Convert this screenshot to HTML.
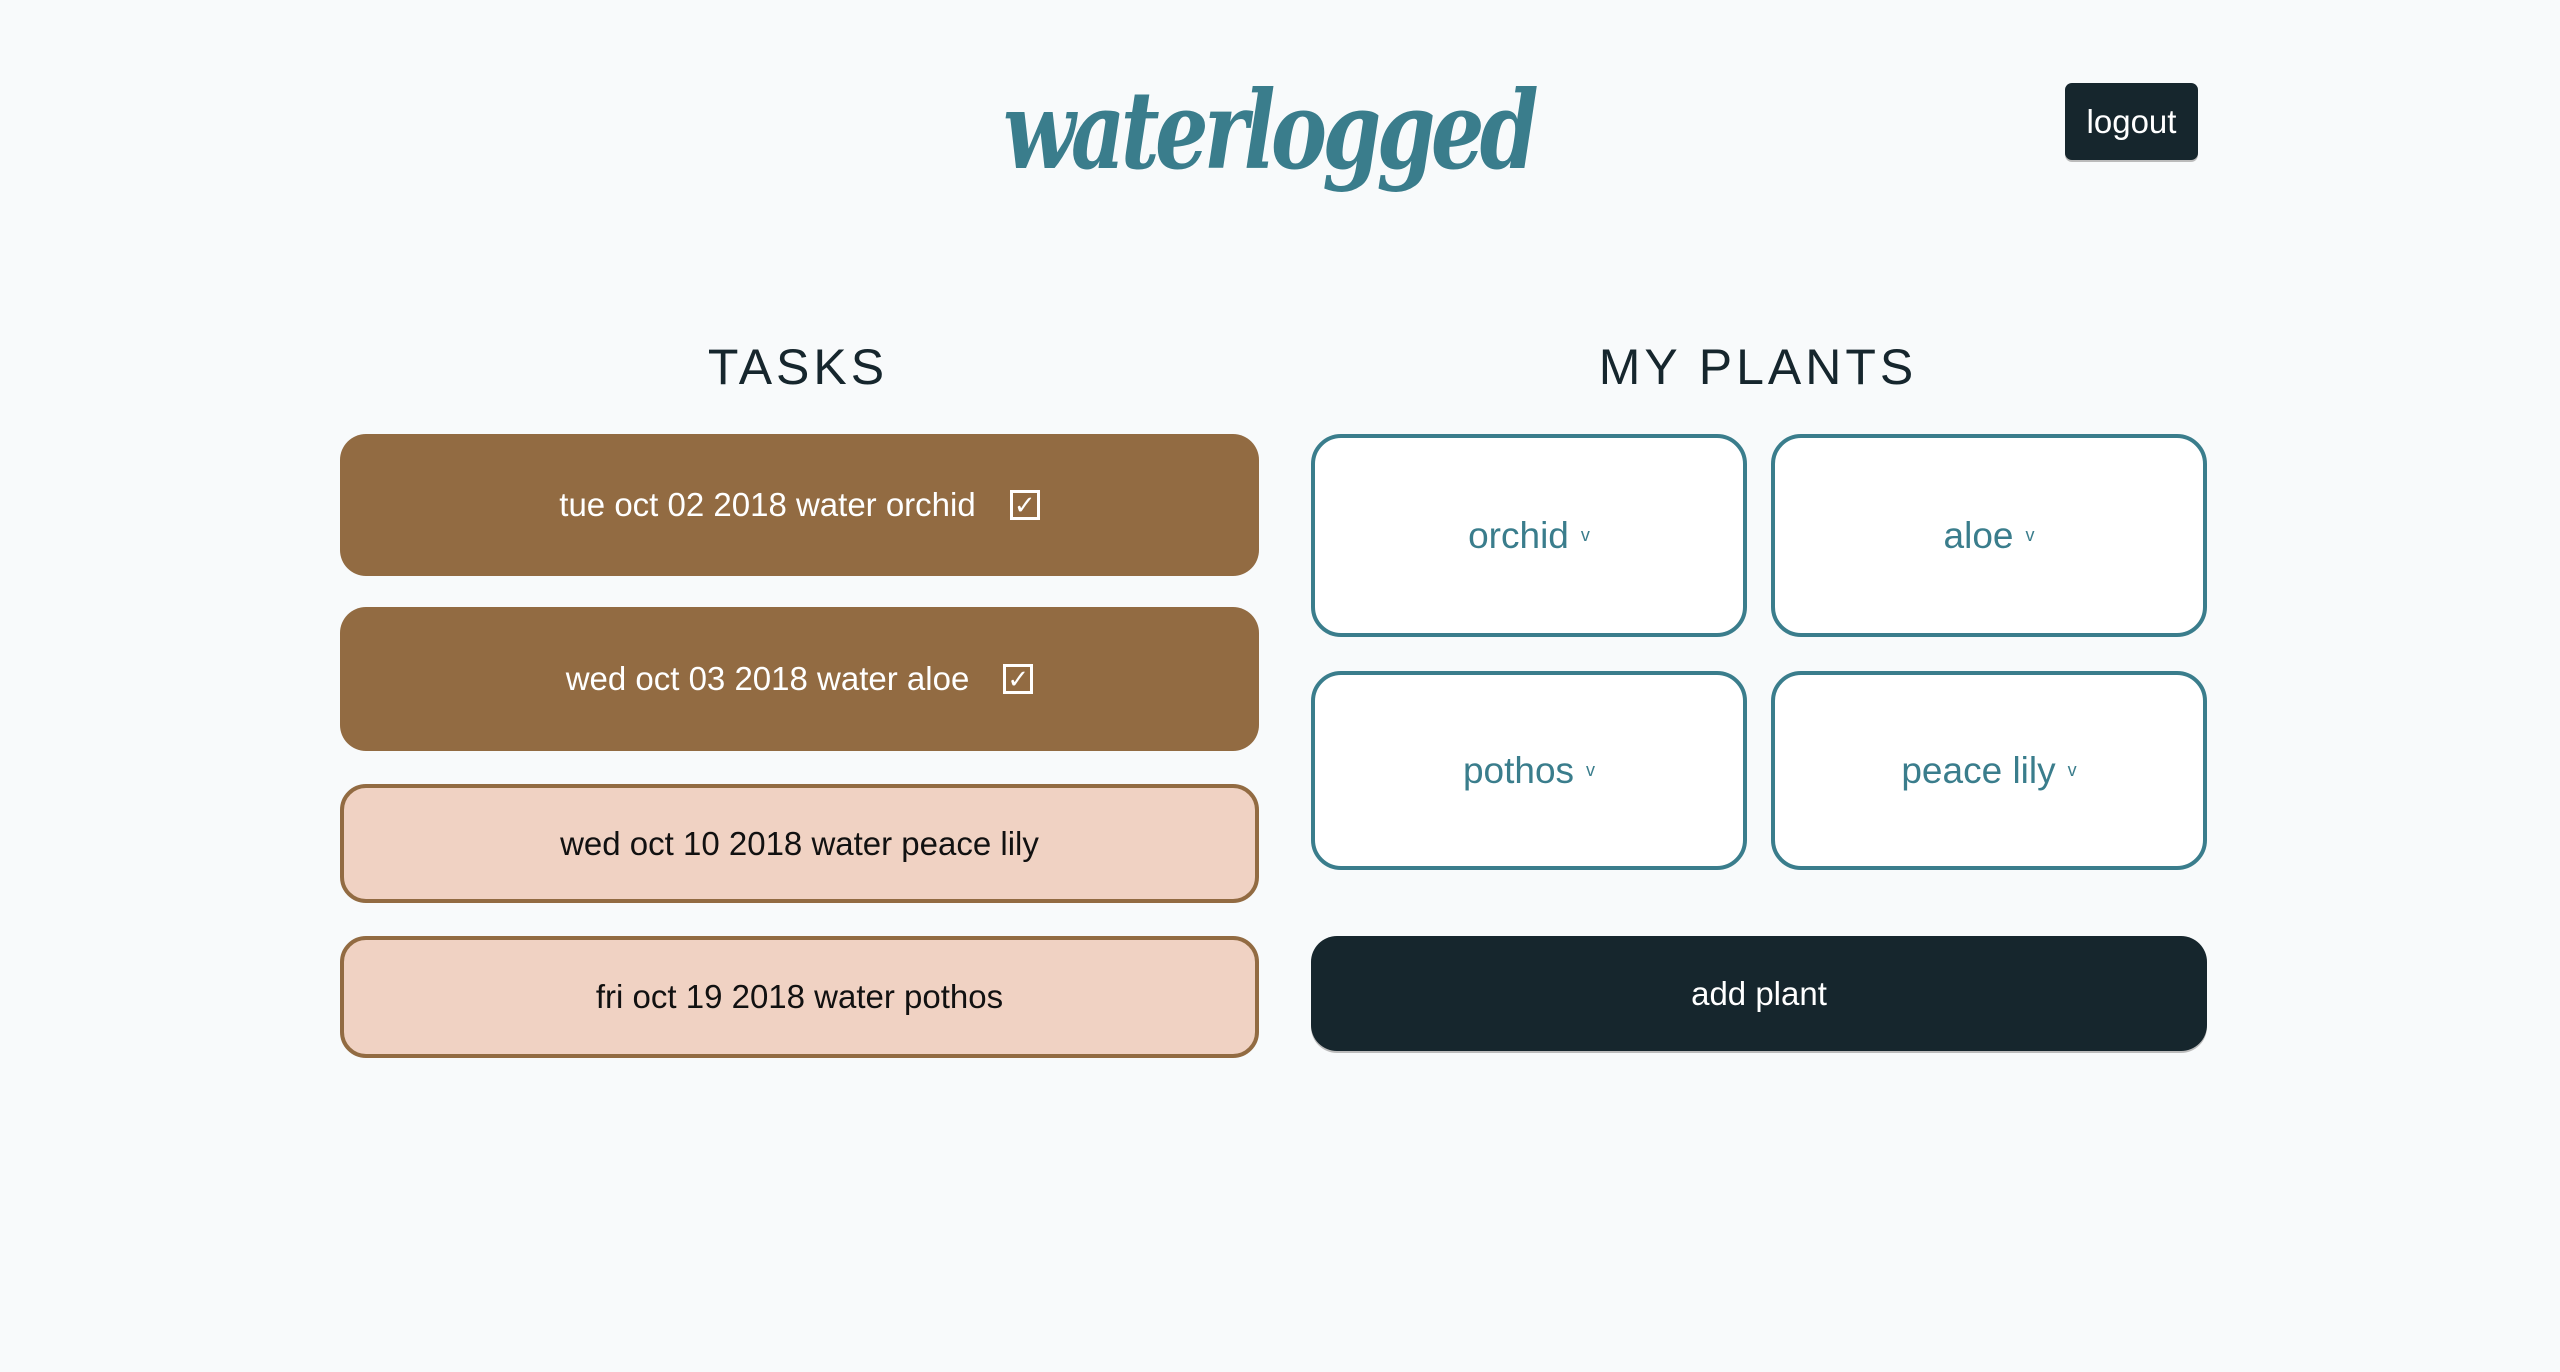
<!DOCTYPE html>
<html><head><meta charset="utf-8"><style>
*{box-sizing:border-box;margin:0;padding:0}
body{width:2560px;height:1372px;background:#f8fafb;font-family:"Liberation Sans",sans-serif;position:relative;overflow:hidden}
.abs{position:absolute}
.logo{left:937px;top:68px;width:600px;text-align:center;font-family:"DejaVu Serif","Liberation Serif",serif;font-weight:bold;font-style:italic;font-size:108px;color:#3a7d8c;letter-spacing:-6px;transform:scaleX(0.78);transform-origin:center}
.logout{left:2065px;top:83px;width:133px;height:77px;background:#16262d;border-radius:7px;color:#fff;font-size:33px;display:flex;align-items:center;justify-content:center;box-shadow:0 2px 0 #bbb}
.h{top:338px;font-size:50px;letter-spacing:4px;color:#16262d;text-align:center}
.task{left:340px;width:919px;border-radius:26px;display:flex;align-items:center;justify-content:center;font-size:33px}
.done{background:#926b42;color:#fff}
.todo{background:#f0d2c3;border:4px solid #926b42;color:#111}
.chk{display:inline-block;width:30px;height:30px;border:3px solid #fff;margin-left:34px;font-size:26px;line-height:24px;text-align:center}
.plant{width:436px;border:4px solid #3a7d8c;border-radius:30px;background:#fff;display:flex;align-items:center;justify-content:center;color:#3a7d8c;font-size:37px}
.plant small{font-size:18px;margin-left:12px}
.add{left:1311px;top:936px;width:896px;height:115px;background:#16262d;border-radius:26px;color:#fff;font-size:33px;display:flex;align-items:center;justify-content:center;box-shadow:0 2px 0 #bbb}
</style></head><body>
<div class="abs logo">waterlogged</div>
<div class="abs logout">logout</div>
<div class="abs h" style="left:598px;width:400px">TASKS</div>
<div class="abs h" style="left:1458px;width:600px">MY PLANTS</div>
<div class="abs task done" style="top:434px;height:142px">tue oct 02 2018 water orchid<span class="chk">✓</span></div>
<div class="abs task done" style="top:607px;height:144px">wed oct 03 2018 water aloe<span class="chk">✓</span></div>
<div class="abs task todo" style="top:784px;height:119px">wed oct 10 2018 water peace lily</div>
<div class="abs task todo" style="top:936px;height:122px">fri oct 19 2018 water pothos</div>
<div class="abs plant" style="left:1311px;top:434px;height:203px">orchid<small>v</small></div>
<div class="abs plant" style="left:1771px;top:434px;height:203px">aloe<small>v</small></div>
<div class="abs plant" style="left:1311px;top:671px;height:199px">pothos<small>v</small></div>
<div class="abs plant" style="left:1771px;top:671px;height:199px">peace lily<small>v</small></div>
<div class="abs add">add plant</div>
</body></html>
